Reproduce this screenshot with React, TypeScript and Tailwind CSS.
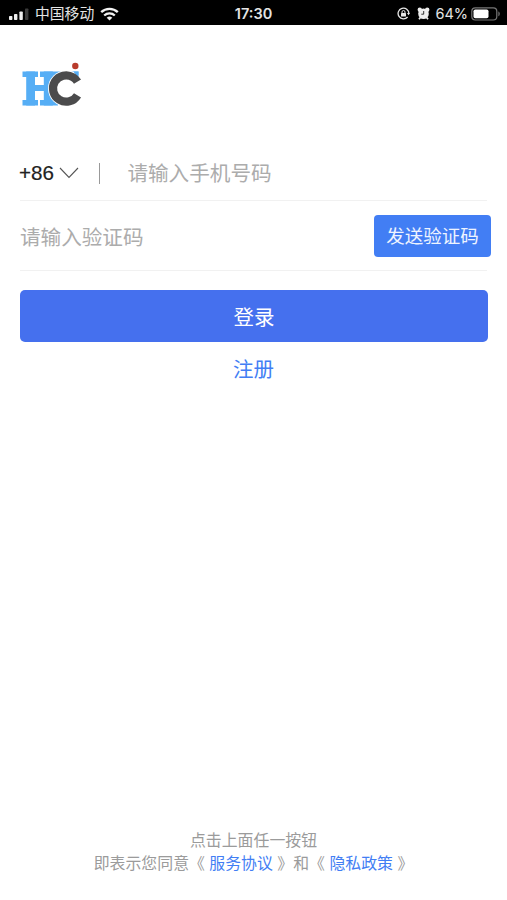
function StatusBar() {
  return (
    <header className="grid h-[25px] grid-cols-3 items-center bg-black text-[#e4e4e4]">
      <div className="flex items-center pt-[2px] pl-[9px]">
        <svg width="21" height="12" viewBox="0 0 21 12" fill="#eeeeee">
          <rect x="0" y="8" width="3.4" height="4" rx="0.8" />
          <rect x="5" y="6" width="3.4" height="6" rx="0.8" />
          <rect x="10.4" y="3.5" width="3.4" height="8.5" rx="0.8" />
          <rect x="16" y="0.5" width="3.4" height="11.5" rx="0.8" fill="#3b3b3b" />
        </svg>
        <span className="ml-[5px] whitespace-nowrap text-[14.8px] leading-[20px]">中国移动</span>
        <svg className="ml-[6px] shrink-0" width="19" height="14" viewBox="0 0 19 14" fill="none" stroke="#f2f2f2">
          <path d="M1.2 5.2a12 12 0 0 1 16.6 0" strokeWidth="2.4" />
          <path d="M4.2 8.5a7.7 7.7 0 0 1 10.6 0" strokeWidth="2.3" />
          <path d="M9.5 13.6 6.7 10.8a4 4 0 0 1 5.6 0Z" fill="#f2f2f2" stroke="none" />
        </svg>
      </div>
      <div className="pt-[2px] text-center font-['Inter','Liberation_Sans',sans-serif] text-[14.5px] leading-[20px] font-semibold">
        17:30
      </div>
      <div className="flex items-center justify-end pt-[2px] pr-[6px]">
        <svg width="13" height="13" viewBox="0 0 13 13" fill="none" stroke="#e8e8e8">
          <path d="M10.6 10A5.4 5.4 0 1 1 11.9 6.5" strokeWidth="1.3" />
          <path d="M10 6.1h3l-1.5 2.2Z" fill="#e8e8e8" stroke="none" />
          <rect x="4" y="5.9" width="5" height="3.5" rx="0.5" fill="#e8e8e8" stroke="none" />
          <path d="M5 6V5a1.5 1.5 0 0 1 3 0v1" strokeWidth="1" />
        </svg>
        <svg className="ml-[7px]" width="13" height="13" viewBox="0 0 13 13">
          <circle cx="2.8" cy="2.8" r="2.2" fill="#eeeeee" />
          <circle cx="10.2" cy="2.8" r="2.2" fill="#eeeeee" />
          <path d="m2 12.3 2-2.5m7 2.5L9 9.8" stroke="#eeeeee" strokeWidth="1.8" />
          <circle cx="6.5" cy="6.8" r="5.3" fill="#eeeeee" />
          <path d="M6.7 4v3.2H4.3" fill="none" stroke="#333" strokeWidth="1" />
        </svg>
        <span className="ml-[5px] font-['Inter','Liberation_Sans',sans-serif] text-[14.5px] leading-[20px]">64%</span>
        <svg className="ml-[3px]" width="30" height="14" viewBox="0 0 30 14">
          <rect x="0.8" y="0.8" width="25" height="12.2" rx="3.5" fill="none" stroke="#777" strokeWidth="1.2" />
          <rect x="2.5" y="2.5" width="15" height="8.8" rx="1.8" fill="#fff" />
          <path d="M27.4 4.5c1.8.7 1.8 4 0 4.8Z" fill="#777" />
        </svg>
      </div>
    </header>
  )
}

function Logo() {
  return (
    <svg width="64" height="48" viewBox="0 0 64 48" aria-label="HC">
      <g fill="#56aef5">
        <rect x="1.5" y="9.5" width="15.5" height="5.5" />
        <rect x="5.2" y="9.5" width="8.8" height="34" />
        <rect x="1.5" y="38" width="15.5" height="5.5" />
        <rect x="13" y="23" width="14" height="6" />
        <rect x="19" y="9.5" width="38.5" height="5.5" />
        <rect x="22.8" y="9.5" width="9" height="34" />
        <rect x="19" y="38" width="18" height="5.5" />
      </g>
      <circle cx="45.2" cy="26.5" r="18.2" fill="#fff" />
      <path d="M52.5 9.5h5v7.5Z" fill="#56aef5" />
      <circle
        cx="45.2"
        cy="26.5"
        r="13.2"
        fill="none"
        stroke="#4b4b4c"
        strokeWidth="8.2"
        pathLength="360"
        strokeDasharray="298 62"
        transform="rotate(31 45.2 26.5)"
      />
      <circle cx="54.3" cy="4" r="3.2" fill="#b93b2c" />
    </svg>
  )
}

export default function App() {
  return (
    <div className="flex h-[900px] w-[507px] flex-col bg-white font-['Liberation_Sans','Noto_Sans_CJK_SC',sans-serif]">
      <StatusBar />

      <main className="flex flex-col px-5">
        <div className="mt-[37px] ml-[1px] h-[48px]">
          <Logo />
        </div>

        <div className="mt-[36px] flex h-[55px] items-center border-b border-[#f1f1f1] text-[20.6px]">
          <span className="-ml-px text-[#222222] [-webkit-text-stroke:0.2px_#222222]">+86</span>
          <svg className="ml-[5px]" width="20" height="12" viewBox="0 0 20 12" fill="none" stroke="#555" strokeWidth="1.1">
            <path d="m1 1 9 9.5L19 1" />
          </svg>
          <div className="ml-[20px] h-[21px] w-[1.5px] bg-[#999999]" />
          <span className="ml-[27px] pt-[3px] text-[#acacac]">请输入手机号码</span>
        </div>

        <div className="-mr-1 flex h-[69px] items-center justify-between">
          <span className="pt-[5px] text-[20.6px] text-[#acacac]">请输入验证码</span>
          <button className="h-[42px] w-[117px] rounded-[4px] bg-[#427ef4] pt-[3px] text-[18.5px] text-[#eef4ff]">
            发送验证码
          </button>
        </div>
        <div className="h-px bg-[#f1f1f1]" />

        <button className="mt-[19px] -mr-px h-[52px] rounded-[5px] bg-[#4570ee] pt-[4px] text-[20.5px] text-white">
          登录
        </button>
        <a className="mt-[11px] text-center text-[20.5px] leading-[33px] text-[#427ef4]">注册</a>
      </main>

      <footer className="mt-auto mb-[25px] text-center text-[15.9px] leading-[23px] text-[#9b9b9b]">
        <p>点击上面任一按钮</p>
        <p className="whitespace-nowrap">
          即表示您同意《 <a className="text-[#427ef4]">服务协议</a> 》和《 <a className="text-[#427ef4]">隐私政策</a> 》
        </p>
      </footer>
    </div>
  )
}
